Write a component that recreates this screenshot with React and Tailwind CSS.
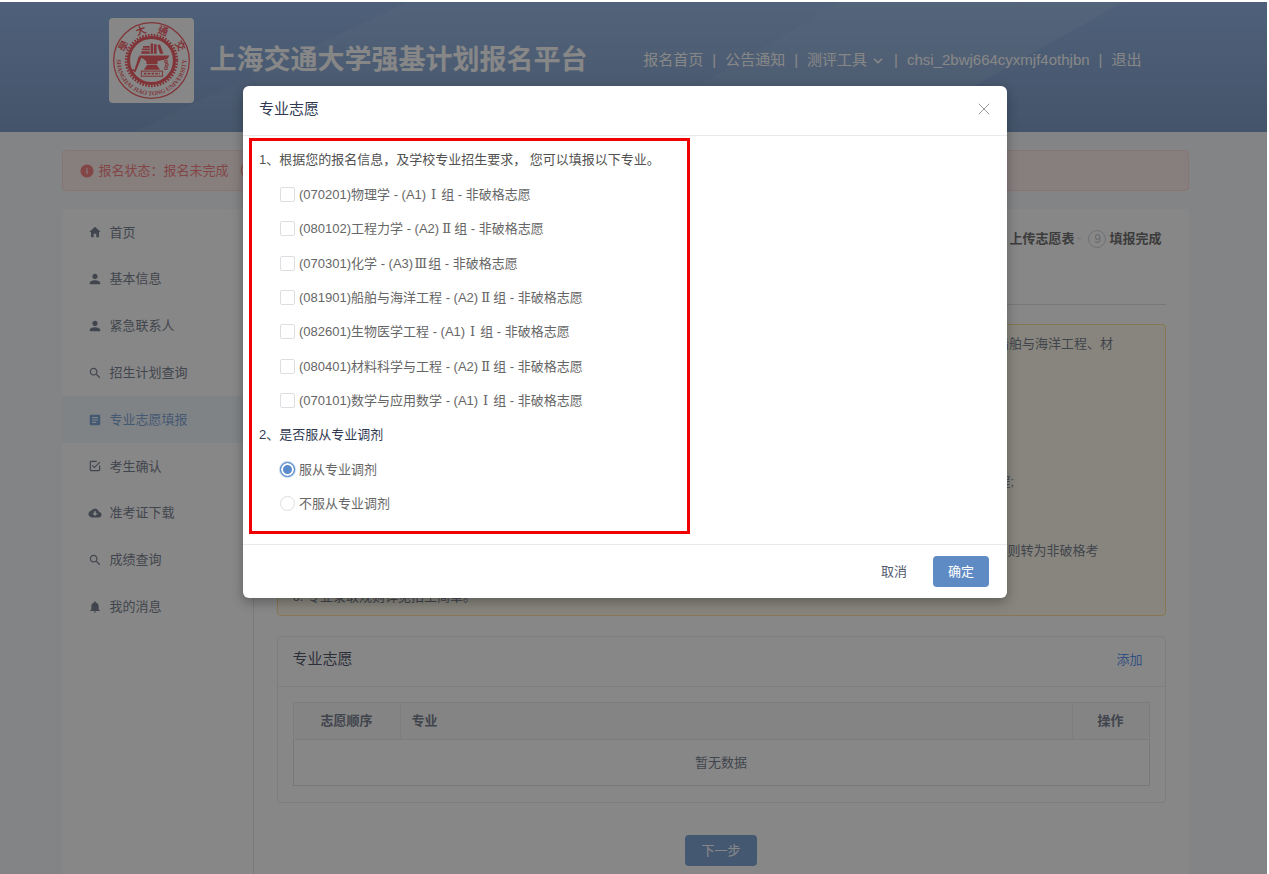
import {
  IoIosInformationCircle,
  IoMdCheckboxOutline,
  IoMdCloudDownload,
  IoMdHome,
  IoMdNotifications,
  IoMdPerson,
  IoMdSearch,
} from "react-icons/io";
import { MdArticle } from "react-icons/md";
import { ChevronDown, X } from "lucide-react";

const menuItems = [
  { label: "首页", icon: IoMdHome },
  { label: "基本信息", icon: IoMdPerson },
  { label: "紧急联系人", icon: IoMdPerson },
  { label: "招生计划查询", icon: IoMdSearch },
  { label: "专业志愿填报", icon: MdArticle, active: true },
  { label: "考生确认", icon: IoMdCheckboxOutline },
  { label: "准考证下载", icon: IoMdCloudDownload },
  { label: "成绩查询", icon: IoMdSearch },
  { label: "我的消息", icon: IoMdNotifications },
];

const steps = [
  { no: 8, label: "上传志愿表" },
  { no: 9, label: "填报完成" },
];

const notices = [
  "1. 根据学校强基计划招生简章，考生可以填报的专业包括：数学与应用数学、物理学、化学、生物医学工程、工程力学以及船舶与海洋工程、材",
  "料科学与工程。",
  "2. 考生须根据高考选考科目要求填报专业志愿。",
  "3. 各组专业如下：",
  "（A1）Ⅰ组：数学与应用数学、物理学、生物医学工程；",
  "（A3）Ⅲ组：化学；",
  "（A2）Ⅱ组：考生须选考物理科目并符合要求方可填报，该组包含的招生专业为工程力学、材料科学与工程、船舶与海洋工程;",
  "4. 非破格考生最多可填报同一组内的全部专业。",
  "5. 破格考生填报说明：",
  "符合破格条件的考生可以填报破格志愿，高考成绩达到所在省份强基计划入围标准要求且未通过学校组织的破格资格审核的，则转为非破格考",
  "生参加选拔。",
  "6. 专业录取规则详见招生简章。",
];

const majors = [
  { name: "(070201)物理学", code: "A1", group: "Ⅰ" },
  { name: "(080102)工程力学", code: "A2", group: "Ⅱ" },
  { name: "(070301)化学", code: "A3", group: "Ⅲ" },
  { name: "(081901)船舶与海洋工程", code: "A2", group: "Ⅱ" },
  { name: "(082601)生物医学工程", code: "A1", group: "Ⅰ" },
  { name: "(080401)材料科学与工程", code: "A2", group: "Ⅱ" },
  { name: "(070101)数学与应用数学", code: "A1", group: "Ⅰ" },
];

function Seal() {
  return (
    <svg viewBox="0 0 100 100" className="size-full text-[#f0303a]" aria-hidden="true">
      <defs>
        <path id="seal-bottom" d="M9 50a41 41 0 0 0 82 0" />
      </defs>
      <g fill="none" stroke="currentColor">
        <circle cx="50" cy="50" r="44.5" strokeWidth="1.5" />
        <circle cx="50" cy="50" r="27" strokeWidth="3.6" />
        <circle cx="50" cy="50" r="29.8" strokeWidth="3.2" strokeDasharray="2 1.468" />
      </g>
      <text fill="currentColor" fontSize="7.4" fontWeight="bold" fontFamily="Liberation Serif, serif">
        <textPath href="#seal-bottom" startOffset="50%" textAnchor="middle">
          SHANGHAI JIAO TONG UNIVERSITY
        </textPath>
      </text>
      <g
        fill="currentColor"
        fontSize="12"
        fontWeight="bold"
        fontFamily="Noto Sans CJK TC, sans-serif"
        textAnchor="middle"
      >
        <text transform="translate(21 35) rotate(-60)">學</text>
        <text transform="translate(39 19) rotate(-19)">大</text>
        <text transform="translate(62 19) rotate(20)">通</text>
        <text transform="translate(80 35) rotate(60)">交</text>
      </g>
      <g fill="currentColor">
        <path d="M40 33h8v2h-8zM39 36h9v2h-9zM38 39h10v3h-10zM49 30h3v12h-3zM53 31h3v11h-3zM57 32l3-1 4 11h-4z" />
        <path d="M36 44h35l-2 4-12 3v3h-13v-3l-5-4h-3z" />
        <path d="M45 55h11l4 6H41z" />
        <path d="M35 45l3 2-7 17-5-3 1-1 3 1z" />
      </g>
      <g fill="none" stroke="currentColor">
        <rect x="38" y="62.500" width="25" height="6" strokeWidth="1.200" />
        <path d="M41 65.500h19" strokeWidth="2" strokeDasharray="3 1.500" />
        <circle cx="67" cy="51" r="1.600" strokeWidth="1.200" />
        <circle cx="68" cy="55" r="1.600" strokeWidth="1.200" />
        <circle cx="67" cy="59" r="1.600" strokeWidth="1.200" />
      </g>
    </svg>
  );
}

function Header() {
  return (
    <header className="relative bg-linear-to-b from-[#73a0de] to-[#5780b8] pr-[17px]">
      <svg
        className="absolute inset-0 size-full"
        viewBox="0 0 1267 130"
        preserveAspectRatio="none"
        aria-hidden="true"
      >
        <path d="M133 130L408 0h715L893 130z" fill="#fff" opacity="0.05" />
        <path d="M620 130L840 0h283L893 130z" fill="#fff" opacity="0.05" />
      </svg>
      <div className="relative mx-auto flex h-[130px] max-w-[1127px] items-start justify-between px-[47px] pt-4">
        <div className="flex items-center gap-4">
          <div className="size-[85px] rounded bg-white">
            <Seal />
          </div>
          <h1 className="text-[27px] font-bold text-white">上海交通大学强基计划报名平台</h1>
        </div>
        <nav className="flex h-[85px] items-center gap-[9px] text-[15px] text-white">
          <a href="#home">报名首页</a>
          <span>|</span>
          <a href="#notice">公告通知</a>
          <span>|</span>
          <a href="#tools" className="flex items-center gap-1">
            测评工具
            <ChevronDown className="size-[14px]" strokeWidth={3} />
          </a>
          <span>|</span>
          <a href="#user">chsi_2bwj664cyxmjf4othjbn</a>
          <span>|</span>
          <a href="#logout">退出</a>
        </nav>
      </div>
    </header>
  );
}

function Sidebar() {
  return (
    <aside className="w-[192px] shrink-0 border-r border-[#dcdee2]">
      <nav className="flex h-[421px] flex-col">
        {menuItems.map(({ label, icon: Icon, active }) => (
          <a
            key={label}
            href="#menu"
            className={`flex flex-1 items-center gap-2 pl-[26px] ${
              active ? "bg-[#ebf5fb] text-[#5b8bcb]" : "text-[#515a6e]"
            }`}
          >
            <Icon className="size-[14px]" />
            {label}
          </a>
        ))}
      </nav>
    </aside>
  );
}

function MajorCard() {
  return (
    <section className="mt-5 rounded border border-[#e4e6ea]">
      <div className="flex h-[50px] items-center justify-between border-b border-[#e8eaec] pr-[22px] pb-1 pl-[15px]">
        <h2 className="text-[15px] text-[#17233d]">专业志愿</h2>
        <button type="button" className="text-[#2d78f0]">
          添加
        </button>
      </div>
      <div className="px-[15px] pt-[15px] pb-4">
        <table className="w-full border-collapse border border-[#d8dade]">
          <thead>
            <tr className="h-[37px] bg-[#f8f8f9] text-[#515a6e]">
              <th className="w-[107px] border border-[#e4e6ea]">志愿顺序</th>
              <th className="border border-[#e4e6ea] px-[11px] text-left">专业</th>
              <th className="w-[77px] border border-[#e4e6ea]">操作</th>
            </tr>
          </thead>
          <tbody>
            <tr className="h-[46px]">
              <td colSpan={3} className="text-center text-[#515a6e]">
                暂无数据
              </td>
            </tr>
          </tbody>
        </table>
      </div>
    </section>
  );
}

function Main() {
  return (
    <main className="min-w-0 flex-1 px-[23px] pb-2">
      <div className="flex h-24 items-start justify-end border-b border-[#d4d7dc] pt-5">
        <ol className="flex items-center gap-[3px] pr-1 font-bold text-[#444]">
          {steps.map(({ no, label }) => (
            <li
              key={no}
              className="flex items-center gap-[3px] before:mr-1 before:h-px before:w-1 before:bg-[#d0d2d6]"
            >
              <span className="flex size-[18px] items-center justify-center rounded-full border border-[#c5c8ce] text-xs font-normal text-[#b5b8be]">
                {no}
              </span>
              {label}
            </li>
          ))}
        </ol>
      </div>
      <div className="mt-[19px] rounded border border-[#ffd77a] bg-[#fff9e6] px-[15px] py-[7px] leading-[23px] text-[#515a6e]">
        {notices.map((line) => (
          <p key={line} className="truncate">
            {line}
          </p>
        ))}
      </div>
      <MajorCard />
      <div className="mt-8 text-center">
        <button type="button" className="h-[31px] rounded bg-[#5b8bcb] px-4 text-white">
          下一步
        </button>
      </div>
    </main>
  );
}

function MajorDialog() {
  return (
    <div
      role="dialog"
      aria-labelledby="dialog-title"
      className="w-[764px] rounded-md bg-white shadow-[0_4px_12px_rgba(0,0,0,0.3)]"
    >
      <div className="flex h-[50px] items-center justify-between border-b border-[#e8eaec] pr-[13px] pb-[3px] pl-4">
        <h2 id="dialog-title" className="text-[15px] text-[#2f3a52]">
          专业志愿
        </h2>
        <button type="button" aria-label="关闭">
          <X className="size-5 text-[#999]" strokeWidth={1.2} />
        </button>
      </div>
      <div className="px-1.5 pt-0.5 pb-[10px]">
        <div className="grid h-[396px] w-[441px] auto-rows-fr items-center border-3 border-[#f00000] px-[7px] pt-0.5 pb-2.5 text-[#515151]">
          <p>1、根据您的报名信息，及学校专业招生要求， 您可以填报以下专业。</p>
          {majors.map(({ name, code, group }) => (
            <label key={name} className="flex items-center gap-1 pl-[21px] text-[#666]">
              <input
                type="checkbox"
                className="size-[15px] appearance-none rounded-xs border border-[#dcdee2] bg-white checked:bg-[#5b8bcb]"
              />
              <span>
                {name} - ({code})
                <span className="inline-block w-[15px] text-center font-['DejaVu_Serif',serif] leading-none">
                  {group}
                </span>
                组 - 非破格志愿
              </span>
            </label>
          ))}
          <p className="text-[#2f3a52]">2、是否服从专业调剂</p>
          {["服从专业调剂", "不服从专业调剂"].map((option, index) => (
            <label key={option} className="flex items-center gap-1 pl-[21px] text-[#666]">
              <input
                type="radio"
                name="adjust"
                defaultChecked={index === 0}
                className="size-[15px] appearance-none rounded-full border border-[#dcdee2] bg-white checked:border-[#5b8bcb] checked:bg-[#5b8bcb] checked:shadow-[inset_0_0_0_2px_#fff,0_0_0_1px_#c5d8f0]"
              />
              {option}
            </label>
          ))}
        </div>
      </div>
      <div className="flex h-[54px] items-center justify-end gap-[26px] border-t border-[#e8eaec] pr-[18px]">
        <button type="button" className="text-[#515a6e]">
          取消
        </button>
        <button type="button" className="h-[31px] rounded bg-[#5f8bc4] px-[15px] text-white">
          确定
        </button>
      </div>
    </div>
  );
}

export default function App() {
  return (
    <div className="flex min-h-screen flex-col bg-white pt-0.5 pr-0.5 font-['Liberation_Sans','Noto_Sans_CJK_SC',sans-serif] text-[13px]">
      <div className="relative flex flex-1 flex-col bg-[#f5f7f9]">
        <Header />
        <div className="flex flex-1 flex-col pr-[17px]">
          <div className="mx-auto flex w-full max-w-[1127px] flex-1 flex-col">
            <div className="mt-[18px] flex h-[41px] items-center gap-1 rounded border border-[#ffcfcf] bg-[#ffe9e9] px-4 text-[#f55c5c]">
              <IoIosInformationCircle className="size-4" />
              报名状态：报名未完成 （志愿未提交）
            </div>
            <div className="mt-[18px] flex flex-1 bg-white">
              <Sidebar />
              <Main />
            </div>
          </div>
        </div>
        <div className="absolute inset-0 flex items-start justify-center bg-[rgba(55,55,55,0.6)] pt-[84px] pr-[17px]">
          <MajorDialog />
        </div>
      </div>
    </div>
  );
}
